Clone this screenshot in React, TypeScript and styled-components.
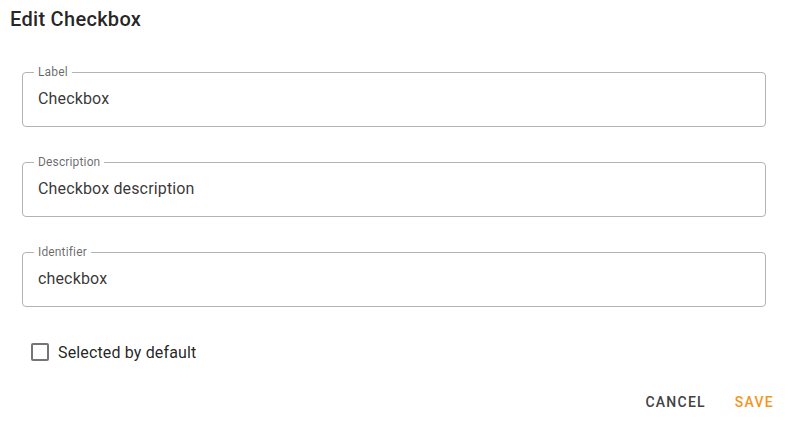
import React, { useState } from 'react';
import styled, { createGlobalStyle } from 'styled-components';

const GlobalStyle = createGlobalStyle`
  html, body {
    margin: 0;
    padding: 0;
    background: #fff;
    font-family: Roboto, "Liberation Sans", Arial, sans-serif;
    color: rgba(0, 0, 0, 0.87);
  }
  * {
    box-sizing: border-box;
  }
`;

const Dialog = styled.div`
  width: 789px;
  height: 423px;
  display: flex;
  flex-direction: column;
`;

const Title = styled.h2`
  margin: 3px 0 0 10px;
  font-size: 20px;
  font-weight: 500;
  line-height: 32px;
  letter-spacing: 0.3px;
`;

const Form = styled.form`
  display: flex;
  flex-direction: column;
  gap: 29px;
  padding: 31px 23px 0 22px;
`;

const Field = styled.fieldset`
  margin: 0;
  padding: 9px 15px 15px;
  border: 1px solid #b3b3b3;
  border-radius: 4px;
  min-width: 0;
`;

const Legend = styled.legend`
  margin-left: -4px;
  padding: 0 4px;
  font-size: 12px;
  line-height: 12px;
  letter-spacing: 0.15px;
  color: rgba(0, 0, 0, 0.6);
`;

const Input = styled.input`
  display: block;
  width: 100%;
  height: 24px;
  padding: 0;
  border: 0;
  outline: none;
  background: transparent;
  font: inherit;
  font-size: 16px;
  line-height: 24px;
  letter-spacing: 0.15px;
  color: rgba(0, 0, 0, 0.8);
`;

const CheckRow = styled.label`
  display: flex;
  align-items: center;
  gap: 9px;
  height: 24px;
  margin: 33px 0 0 31px;
  font-size: 16px;
  letter-spacing: 0.15px;
  cursor: pointer;
`;

const Box = styled.span<{ $checked: boolean }>`
  width: 18px;
  height: 18px;
  border: 2px solid #757575;
  border-radius: 2px;
  background: ${(p) => (p.$checked ? '#f7941d' : 'transparent')};
  border-color: ${(p) => (p.$checked ? '#f7941d' : '#757575')};
`;

const HiddenCheck = styled.input`
  display: none;
`;

const Actions = styled.div`
  display: flex;
  justify-content: flex-end;
  gap: 13px;
  margin-top: 20px;
  padding-right: 7px;
`;

const TextButton = styled.button<{ $primary?: boolean }>`
  height: 36px;
  padding: 0 8px;
  border: 0;
  background: transparent;
  font-family: inherit;
  font-size: 14px;
  font-weight: 500;
  letter-spacing: 1.25px;
  text-transform: uppercase;
  color: ${(p) => (p.$primary ? '#f7941d' : '#424242')};
  cursor: pointer;
`;

const fields = [
  { label: 'Label', value: 'Checkbox' },
  { label: 'Description', value: 'Checkbox description' },
  { label: 'Identifier', value: 'checkbox' },
];

const App: React.FC = () => {
  const [checked, setChecked] = useState(false);

  return (
    <>
      <GlobalStyle />
      <Dialog>
        <Title>Edit Checkbox</Title>
        <Form onSubmit={(e) => e.preventDefault()}>
          {fields.map((f) => (
            <Field key={f.label}>
              <Legend>{f.label}</Legend>
              <Input defaultValue={f.value} />
            </Field>
          ))}
        </Form>
        <CheckRow>
          <HiddenCheck type="checkbox" checked={checked} onChange={() => setChecked(!checked)} />
          <Box $checked={checked} />
          Selected by default
        </CheckRow>
        <Actions>
          <TextButton>Cancel</TextButton>
          <TextButton $primary>Save</TextButton>
        </Actions>
      </Dialog>
    </>
  );
};

export default App;
